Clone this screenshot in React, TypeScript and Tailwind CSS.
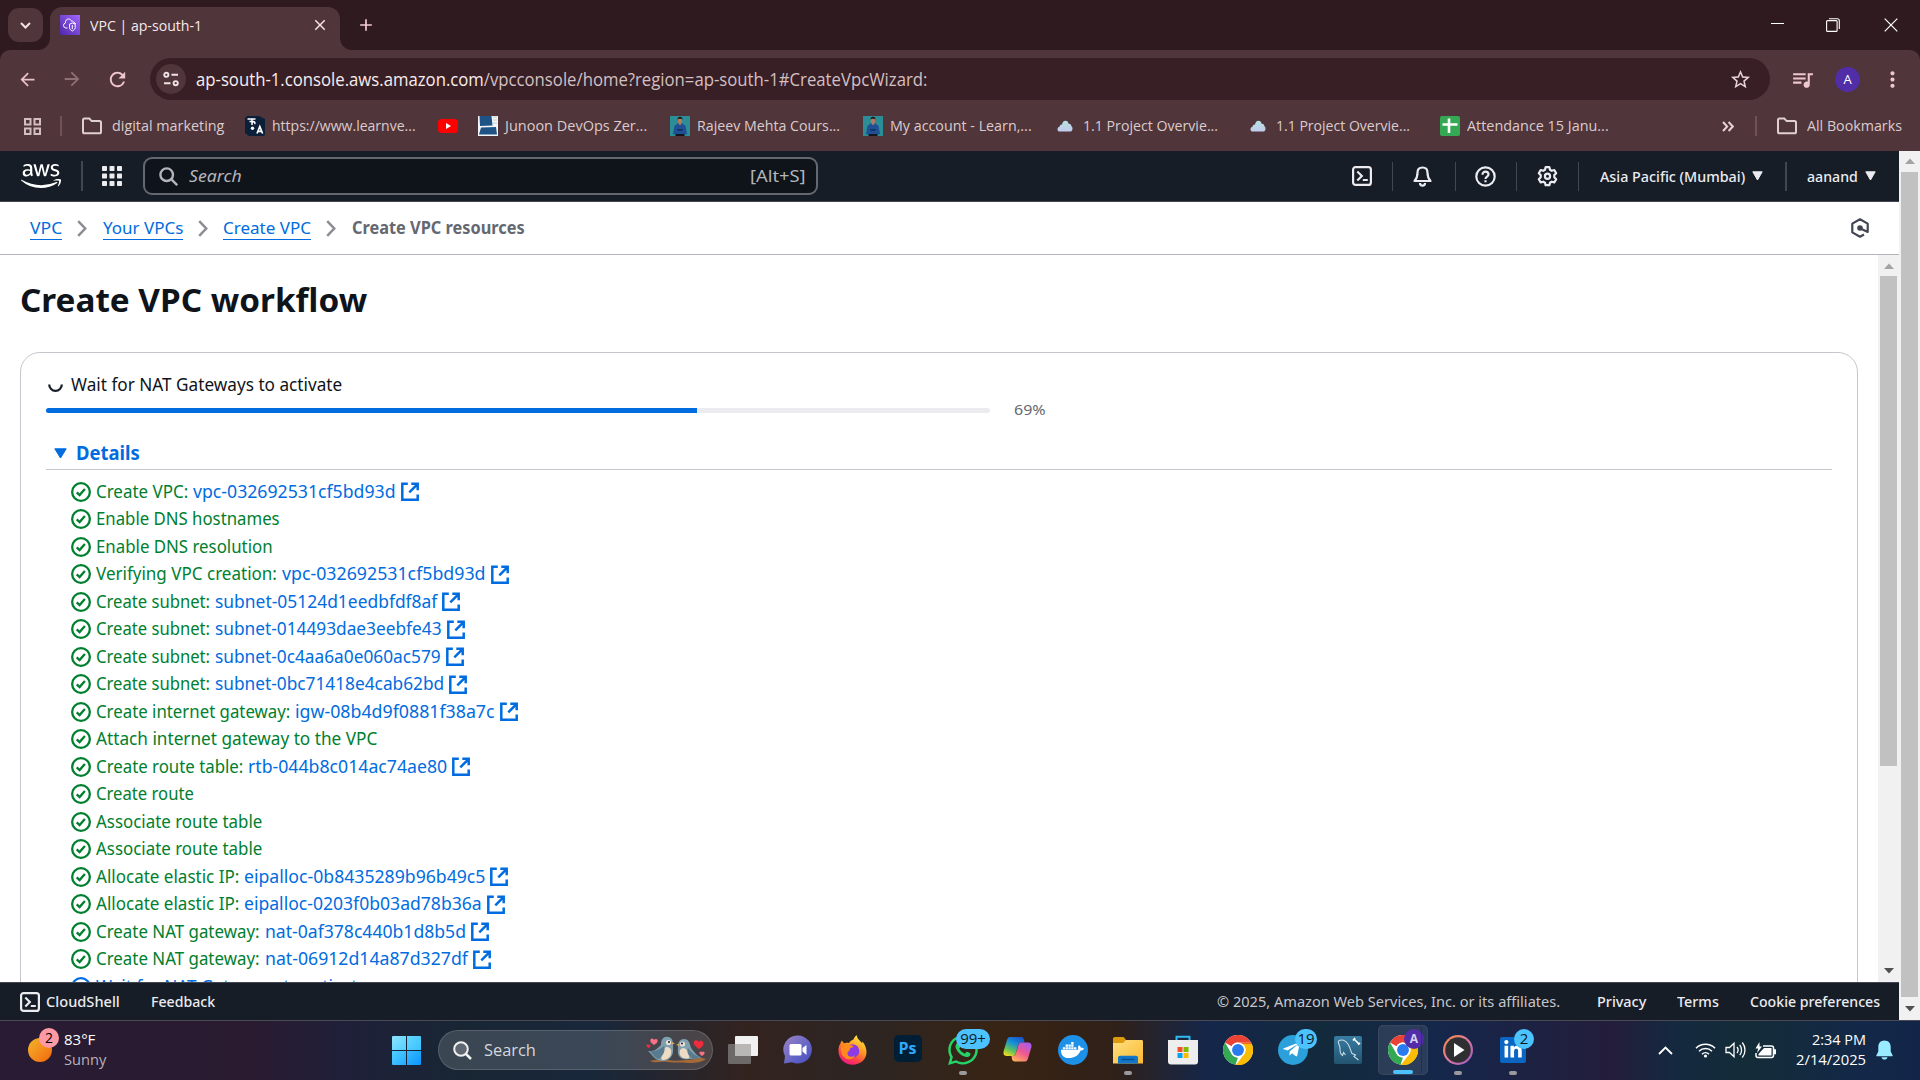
import React, { useLayoutEffect, useRef, useState } from "react";
import { FaAws, FaTelegramPlane, FaWhatsapp, FaLinkedinIn, FaDocker } from "react-icons/fa";
import { MdArrowBack, MdArrowForward, MdRefresh, MdStarBorder, MdQueueMusic, MdMoreVert, MdClose, MdAdd } from "react-icons/md";

/* Text squeezed or stretched to an exact advance width. */
function Fit({ w, className = "", children }: { w: number; className?: string; children: React.ReactNode }) {
  const ref = useRef<HTMLSpanElement>(null);
  const [scale, setScale] = useState(1);
  useLayoutEffect(() => {
    if (ref.current) setScale(w / ref.current.offsetWidth);
  }, [w]);
  return (
    <span className={"block shrink-0 whitespace-nowrap " + className} style={{ width: w }}>
      <span ref={ref} className="inline-block origin-left" style={{ transform: `scaleX(${scale})` }}>
        {children}
      </span>
    </span>
  );
}

function FolderIcon() {
  return (
    <svg className="h-[20px] w-[22px] shrink-0" viewBox="0 0 22 20" fill="none" stroke="#e0cfd1" strokeWidth="2">
      <path d="M2 4.2c0-1 .6-1.7 1.5-1.7h4.8l2.4 2.6h7.8c1 0 1.5.7 1.5 1.6v9c0 .9-.6 1.6-1.5 1.6h-15c-.9 0-1.5-.7-1.5-1.6z" />
    </svg>
  );
}

function VpcFavicon() {
  return (
    <svg className="h-[20px] w-[20px] shrink-0" viewBox="0 0 20 20" fill="none">
      <defs>
        <linearGradient id="vpc" x1="0" y1="1" x2="1" y2="0">
          <stop offset="0" stopColor="#4d27a8" />
          <stop offset="1" stopColor="#a166ff" />
        </linearGradient>
      </defs>
      <rect width="20" height="20" fill="url(#vpc)" />
      <path d="M7.5 13H5.8a2.6 2.6 0 0 1-.3-5.1C5.3 5.5 6.6 4 8.5 4c1.500 0 2.600.8 3 2.200.8-.4 2 0 2.200 1.200 1 .1 1.800.8 2 1.600" stroke="#fff" strokeWidth="1" />
      <path d="M9.500 9.200 12.300 8l2.900 1.200v3.200c0 1.700-1.300 2.800-2.900 3.600-1.600-.8-2.800-1.900-2.800-3.600zM12.300 10v4" stroke="#fff" strokeWidth="1" />
    </svg>
  );
}

function PersonIcon() {
  return (
    <svg className="h-[20px] w-[20px] shrink-0" viewBox="0 0 20 20">
      <rect width="20" height="20" fill="#2b8e96" />
      <path d="M3 18 4.500 10l3-2.500h5L15.500 10 17 18l-3 .5H6z" fill="#1f4f94" />
      <path d="M5.500 18h9v2h-9z" fill="#15151c" />
      <path d="M7 13h6l-1 2H8z" fill="#133465" />
      <path d="M8.500 6h3l-.3 2.300L10 9.300 8.800 8.300z" fill="#b57a5c" />
      <ellipse cx="10" cy="4.300" rx="2.200" ry="2.900" fill="#b57a5c" />
      <path d="M7.600 4C7.400 1.800 8.500.8 10 .8s2.700 1 2.400 3.200C12 3 11.500 2.800 10 2.800S8 3 7.600 4z" fill="#18181c" />
    </svg>
  );
}

function CloudIcon() {
  return (
    <svg className="h-[12px] w-[16px] shrink-0" viewBox="0 0 17 13">
      <defs>
        <linearGradient id="cld" x1="0" y1="0" x2="0" y2="1">
          <stop offset="0" stopColor="#b5e2e2" />
          <stop offset="1" stopColor="#c4caec" />
        </linearGradient>
      </defs>
      <path d="M3 12.500C1.300 12.500.4 11.500.4 10s1-2.500 2.200-2.700C2.800 5.400 4 4.600 5.300 4.800 5.600 2.300 7 .7 9 .7s3 1.300 3.400 3.300c2-.2 3 1 3 2.900 1 .5 1.300 1.400 1.200 2.800-.1 1.800-1.100 2.800-2.800 2.800z" fill="url(#cld)" />
    </svg>
  );
}

function ShellIcon({ color = "#ebebf0" }: { color?: string }) {
  return (
    <svg className="h-[20px] w-[20px] shrink-0" viewBox="0 0 20 20" fill="none" stroke={color} strokeWidth="2.200">
      <rect x="1.100" y="1.100" width="17.800" height="17.800" rx="2.500" />
      <path d="m5.300 5.500 4.500 4.500-4.500 4.500M10.800 14h5" />
    </svg>
  );
}

function Caret({ className = "" }: { className?: string }) {
  return (
    <svg className={"h-[10px] w-[11px] shrink-0 " + className} viewBox="0 0 11 10" fill="currentColor" stroke="currentColor" strokeWidth="1" strokeLinejoin="round">
      <path d="M.8.8h9.400L5.500 9z" />
    </svg>
  );
}

function Check() {
  return (
    <svg className="h-[20px] w-[20px] shrink-0" viewBox="0 0 20 20" fill="none" stroke="#00802f" strokeWidth="2.300">
      <circle cx="10" cy="10" r="8.850" />
      <path d="m5.700 10.300 2.900 2.700 5.300-6" />
    </svg>
  );
}

function External() {
  return (
    <svg className="h-[19px] w-[18px] shrink-0" viewBox="0 0 18 19" fill="none" stroke="#006ce0" strokeWidth="2.500">
      <path d="M6.800 1.800H1.300v16h15.400v-5.300M10.300 1.800h6.400v6.500M16.300 2.300l-8 8" />
    </svg>
  );
}

function Chevron() {
  return (
    <svg className="h-[17px] w-[10px] shrink-0" viewBox="0 0 10 17" fill="none" stroke="#8c8c94" strokeWidth="2.500">
      <path d="m1.200 1.200 7 7.300-7 7.300" />
    </svg>
  );
}

function ScrollArrow({ up = false, color }: { up?: boolean; color: string }) {
  return (
    <svg className="h-[6px] w-[10px] shrink-0" viewBox="0 0 10 6" fill={color}>
      <path d={up ? "M0 6 5 .5 10 6z" : "M0 0h10L5 5.500z"} />
    </svg>
  );
}

function TitleStrip() {
  return (
    <div className="flex h-[50px] shrink-0 bg-[#2f1a20]">
      <div className="mt-2 ml-2 flex h-[34px] w-[35px] shrink-0 items-center justify-center rounded-[11px] bg-[#50353a]">
        <svg className="h-[7px] w-[11px]" viewBox="0 0 11 7" fill="none" stroke="#f3e3e5" strokeWidth="2">
          <path d="m1 1 4.500 4.500L10 1" />
        </svg>
      </div>
      <svg className="mt-[38px] -ml-[5px] h-[12px] w-[12px] shrink-0" viewBox="0 0 12 12" fill="#50353a">
        <path d="M12 0v12H0A12 12 0 0 0 12 0z" />
      </svg>
      <div className="mt-[7px] flex h-[43px] w-[290px] shrink-0 items-start rounded-t-[12px] bg-[#50353a] pt-2 pl-[10px]">
        <VpcFavicon />
        <Fit w={112} className="ml-[10px] text-[15px] leading-5 text-[#f5e9ea]">VPC | ap-south-1</Fit>
        <MdClose className="mt-px ml-[109px] h-[18px] w-[18px] shrink-0 text-[#f3e3e5]" />
      </div>
      <svg className="mt-[38px] h-[12px] w-[12px] shrink-0" viewBox="0 0 12 12" fill="#50353a">
        <path d="M0 0v12h12A12 12 0 0 1 0 0z" />
      </svg>
      <MdAdd className="mt-[15px] ml-[4px] h-[20px] w-[20px] shrink-0 text-[#f3ccd3]" />
      <div className="ml-auto flex items-center pr-[22px] text-white">
        <div className="mb-1 h-px w-[13px] bg-white" />
        <svg className="ml-[42px] h-[14px] w-[14px]" viewBox="0 0 14 14" fill="none" stroke="#fff" strokeWidth="1.100">
          <rect x=".6" y="2.600" width="10.500" height="10.800" rx="1" />
          <path d="M3 .7h8.300c1.300 0 2 .8 2 2v8.300" />
        </svg>
        <svg className="ml-[44px] h-[14px] w-[14px]" viewBox="0 0 14 14" fill="none" stroke="#fff" strokeWidth="1.200">
          <path d="m.7.7 12.600 12.600M13.300.7.700 13.300" />
        </svg>
      </div>
    </div>
  );
}

function AddressBar() {
  return (
    <div className="flex h-[58px] items-center bg-[#50353a] pl-[17px]">
      <MdArrowBack className="h-[21px] w-[21px] text-[#e9c0c8]" />
      <MdArrowForward className="ml-[23px] h-[22px] w-[22px] text-[#8c7075]" />
      <MdRefresh className="ml-[23px] h-[23px] w-[23px] text-[#efc6ce]" />
      <div className="ml-[21px] flex h-[42px] w-[1620px] items-center rounded-full bg-[#381f25] pl-[6px]">
        <div className="flex h-[30px] w-[30px] items-center justify-center rounded-full bg-[#50353a]">
          <svg className="h-[16px] w-[16px]" viewBox="0 0 16 16" fill="none" stroke="#f0e2e4" strokeWidth="1.900">
            <circle cx="3.300" cy="3.800" r="2.100" />
            <path d="M8.500 3.800H15M1 12.200h6.500" />
            <circle cx="12.700" cy="12.200" r="2.100" />
          </svg>
        </div>
        <Fit w={731} className="ml-[10px] text-[18px] leading-6 text-[#d3bfc2]">
          <span className="text-[#f8edee]">ap-south-1.console.aws.amazon.com</span>/vpcconsole/home?region=ap-south-1#CreateVpcWizard:
        </Fit>
        <MdStarBorder className="mr-[18px] ml-auto h-[23px] w-[23px] text-[#e6d3d6]" />
      </div>
      <MdQueueMusic className="ml-[20px] h-[25px] w-[25px] text-[#f0c6ce]" />
      <div className="ml-[20px] flex h-[25px] w-[25px] items-center justify-center rounded-full bg-[#512da8] text-[13px] leading-none text-white">A</div>
      <MdMoreVert className="ml-[20px] h-[25px] w-[25px] text-[#efc6ce]" />
    </div>
  );
}

const mark = "mb-[2px] text-[15px] leading-5";

function Bookmarks() {
  return (
    <div className="flex h-[43px] items-center bg-[#50353a] pb-[7px] pl-[23px] text-[#dccbcd]">
      <svg className="h-[19px] w-[19px] shrink-0" viewBox="0 0 19 19" fill="none" stroke="#d3bfc2" strokeWidth="2">
        <path d="M2 2h5.500v5.500H2zM11.500 2H17v5.500h-5.500zM2 11.500h5.500V17H2zM11.500 11.500H17V17h-5.500z" />
      </svg>
      <div className="ml-[18px] h-5 w-[2px] shrink-0 bg-[#6f5257]" />
      <div className="ml-[19px] flex"><FolderIcon /></div>
      <Fit w={112} className={"ml-[9px] " + mark}>digital marketing</Fit>
      <svg className="ml-[21px] h-[20px] w-[20px] shrink-0" viewBox="0 0 20 20">
        <path d="M2 0h12l6 3v15a2 2 0 0 1-2 2H4l-4-3V2z" fill="#0c1f38" />
        <path d="M2.500 3h8M7 3v6M7 5.500H4.500M7 6.500c2-2 3.500 0 2.500 1.500" stroke="#fff" strokeWidth="1.500" fill="none" />
        <path d="m12 17.500 2.800-7 2.800 7M13 15.300h3.700" stroke="#fff" strokeWidth="1.700" fill="none" />
        <circle cx="7.500" cy="12.300" r="1.700" fill="#fff" />
      </svg>
      <Fit w={144} className={"ml-[7px] " + mark}>https://www.learnve...</Fit>
      <svg className="ml-[22px] h-[14px] w-[20px] shrink-0" viewBox="0 0 20 14">
        <rect width="20" height="14" rx="3.500" fill="#f00" />
        <path d="m8 4 5 3-5 3z" fill="#fff" />
      </svg>
      <svg className="ml-[20px] h-[20px] w-[20px] shrink-0" viewBox="0 0 20 20">
        <rect width="20" height="20" fill="#f3f6f8" />
        <path d="M1.500 0h12l1 9.500-12.500.5zM3 11.500l15-.5 1 7.500H1z" fill="#1f5285" />
        <path d="M15 1h4M15 4h4M15 7h4" stroke="#c5ccd3" />
      </svg>
      <Fit w={142} className={"ml-[7px] " + mark}>Junoon DevOps Zer...</Fit>
      <div className="ml-[23px] flex"><PersonIcon /></div>
      <Fit w={143} className={"ml-[7px] " + mark}>Rajeev Mehta Cours...</Fit>
      <div className="ml-[23px] flex"><PersonIcon /></div>
      <Fit w={142} className={"ml-[7px] " + mark}>My account - Learn,...</Fit>
      <div className="ml-[25px] flex"><CloudIcon /></div>
      <Fit w={135} className={"ml-[10px] " + mark}>1.1 Project Overvie...</Fit>
      <div className="ml-[32px] flex"><CloudIcon /></div>
      <Fit w={134} className={"ml-[10px] " + mark}>1.1 Project Overvie...</Fit>
      <svg className="ml-[30px] h-[20px] w-[20px] shrink-0" viewBox="0 0 20 20">
        <rect width="20" height="20" rx="2" fill="#34a853" />
        <path d="M9 2.500v14.500M2.500 8.500h15" stroke="#fff" strokeWidth="2.600" />
      </svg>
      <Fit w={142} className={"ml-[7px] " + mark}>Attendance 15 Janu...</Fit>
      <svg className="ml-[113px] h-[11px] w-[12px] shrink-0" viewBox="0 0 12 11" fill="none" stroke="#e6d3d6" strokeWidth="2">
        <path d="m1 1 4.200 4.500L1 10M6.600 1l4.200 4.500L6.600 10" />
      </svg>
      <div className="ml-[21px] h-5 w-[2px] shrink-0 bg-[#6f5257]" />
      <div className="ml-[19px] flex"><FolderIcon /></div>
      <Fit w={95} className={"ml-[9px] " + mark}>All Bookmarks</Fit>
    </div>
  );
}

function HeaderRule() {
  return <div className="h-[29px] w-px shrink-0 bg-[#424650]" />;
}

function AwsHeader() {
  return (
    <header className="flex h-[51px] shrink-0 items-center border-b border-[#424650] bg-[#161d26] pl-[21px] font-['Noto_Sans',sans-serif] text-[#ebebf0]">
      <FaAws className="h-[32px] w-[40px] shrink-0 text-white" />
      <div className="ml-[20px] h-[30px] w-[2px] shrink-0 bg-[#424650]" />
      <svg className="ml-[19px] h-[20px] w-[20px] shrink-0" viewBox="0 0 20 20" fill="#ebebf0">
        {[0, 7.5, 15].map((y) => [0, 7.5, 15].map((x) => <rect key={x + "-" + y} x={x} y={y} width="5" height="5" rx=".8" />))}
      </svg>
      <div className="ml-[21px] flex h-[38px] w-[675px] shrink-0 items-center rounded-[9px] border-2 border-[#656871] bg-[#0f141a] pl-[14px]">
        <svg className="h-[19px] w-[19px]" viewBox="0 0 19 19" fill="none" stroke="#b4b4bb" strokeWidth="2.400">
          <circle cx="7.700" cy="7.700" r="6.300" />
          <path d="m12.200 12.200 6 6" />
        </svg>
        <Fit w={53} className="ml-[11px] text-[17px] leading-6 text-[#b4b4bb] italic">Search</Fit>
        <Fit w={56} className="mr-[10px] mb-px ml-auto text-[17px] leading-6 text-[#b4b4bb]">[Alt+S]</Fit>
      </div>
      <div className="ml-[534px] flex"><ShellIcon /></div>
      <div className="ml-[20px] flex"><HeaderRule /></div>
      <svg className="ml-[20px] h-[21px] w-[19px] shrink-0" viewBox="0 0 19 21" fill="none" stroke="#ebebf0" strokeWidth="2.200">
        <path d="M9.500 1.500c3.300 0 5 2.200 5 5.200 0 3.800.9 6 3 8.300h-16c2.100-2.300 3-4.500 3-8.300 0-3 1.700-5.200 5-5.200z" strokeLinejoin="round" />
        <path d="M7 17c0 1.700 1 2.700 2.500 2.700S12 18.700 12 17" />
      </svg>
      <div className="ml-[23px] flex"><HeaderRule /></div>
      <svg className="ml-[19px] h-[21px] w-[21px] shrink-0" viewBox="0 0 21 21" fill="none" stroke="#ebebf0" strokeWidth="2.200">
        <circle cx="10.500" cy="10.500" r="9.200" />
        <path d="M7.500 8.700c0-1.900 1.200-3 3-3s3 1.100 3 2.700c0 2.200-3 2.100-3 4.600M10.500 14.300v2" />
      </svg>
      <div className="ml-[20px] flex"><HeaderRule /></div>
      <svg className="ml-[20px] h-[21px] w-[21px] shrink-0" viewBox="0 0 21 21" fill="none" stroke="#ebebf0" strokeWidth="2.200" strokeLinejoin="round">
        <path d="m8.600 1.200h3.800l.6 2.600 1.700 1 2.600-.8 1.900 3.300-1.900 1.800v2.200l1.900 1.900-1.900 3.200-2.600-.7-1.700 1-.6 2.500H8.600L8 16.700l-1.700-1-2.600.7-1.900-3.200 1.900-1.900V9.100L1.800 7.300 3.700 4l2.600.8 1.700-1z" />
        <circle cx="10.500" cy="10.300" r="2.600" />
      </svg>
      <div className="ml-[20px] flex"><HeaderRule /></div>
      <Fit w={145} className="ml-[21px] text-[15px] leading-6 font-medium">Asia Pacific (Mumbai)</Fit>
      <Caret className="ml-[7px]" />
      <div className="ml-[22px] h-[29px] w-[2px] shrink-0 bg-[#424650]" />
      <Fit w={51} className="ml-[20px] text-[15px] leading-6 font-medium">aanand</Fit>
      <Caret className="ml-[7px]" />
    </header>
  );
}

function Crumb({ w, children }: { w: number; children: React.ReactNode }) {
  return (
    <div className="h-[23px] border-b border-[#006ce0] text-[#006ce0]">
      <Fit w={w} className="leading-[22px]">{children}</Fit>
    </div>
  );
}

function Breadcrumbs() {
  return (
    <nav className="flex h-[53px] shrink-0 items-center border-b border-[#b4b4bb] bg-white pl-[30px] font-['Noto_Sans',sans-serif] text-[17px]">
      <Crumb w={32}>VPC</Crumb>
      <div className="ml-[15px] flex"><Chevron /></div>
      <div className="ml-[16px]"><Crumb w={80}>Your VPCs</Crumb></div>
      <div className="ml-[15px] flex"><Chevron /></div>
      <div className="ml-[15px]"><Crumb w={88}>Create VPC</Crumb></div>
      <div className="ml-[15px] flex"><Chevron /></div>
      <Fit w={173} className="ml-[16px] font-bold text-[#656871]">Create VPC resources</Fit>
      <svg className="mr-[30px] ml-auto h-[20px] w-[18px]" viewBox="0 0 18 20" fill="none" stroke="#424650" strokeWidth="2.200" strokeLinejoin="round">
        <path d="M13 16.500 9 18.700l-7.700-4.300V5.600L9 1.300l7.700 4.300v8.300L9.500 10.500" />
        <circle cx="9" cy="10" r="1.700" fill="#424650" />
      </svg>
    </nav>
  );
}

type Step = { label: string; w: number; link?: string; lw?: number };

const steps: Step[] = [
  { label: "Create VPC:", w: 92, link: "vpc-032692531cf5bd93d", lw: 203 },
  { label: "Enable DNS hostnames", w: 184 },
  { label: "Enable DNS resolution", w: 177 },
  { label: "Verifying VPC creation:", w: 181, link: "vpc-032692531cf5bd93d", lw: 204 },
  { label: "Create subnet:", w: 114, link: "subnet-05124d1eedbfdf8af", lw: 222 },
  { label: "Create subnet:", w: 114, link: "subnet-014493dae3eebfe43", lw: 227 },
  { label: "Create subnet:", w: 114, link: "subnet-0c4aa6a0e060ac579", lw: 226 },
  { label: "Create subnet:", w: 114, link: "subnet-0bc71418e4cab62bd", lw: 229 },
  { label: "Create internet gateway:", w: 194, link: "igw-08b4d9f0881f38a7c", lw: 200 },
  { label: "Attach internet gateway to the VPC", w: 281 },
  { label: "Create route table:", w: 147, link: "rtb-044b8c014ac74ae80", lw: 199 },
  { label: "Create route", w: 98 },
  { label: "Associate route table", w: 166 },
  { label: "Associate route table", w: 166 },
  { label: "Allocate elastic IP:", w: 143, link: "eipalloc-0b8435289b96b49c5", lw: 241 },
  { label: "Allocate elastic IP:", w: 143, link: "eipalloc-0203f0b03ad78b36a", lw: 238 },
  { label: "Create NAT gateway:", w: 164, link: "nat-0af378c440b1d8b5d", lw: 201 },
  { label: "Create NAT gateway:", w: 164, link: "nat-06912d14a87d327df", lw: 203 },
];

function Workflow() {
  return (
    <main className="h-[727px] w-[1878px] shrink-0 overflow-hidden bg-white pl-[20px] font-['Noto_Sans',sans-serif]">
      <Fit w={347} className="mt-[24px] text-[33px] leading-[42px] font-bold text-[#0f141a]">Create VPC workflow</Fit>
      <section className="mt-[31px] h-[900px] w-[1838px] rounded-[20px] border border-[#c6c6cd] pt-[18px] pl-[25px] text-[17.500px] text-[#0f141a]">
        <div className="flex h-[27px] items-center">
          <svg className="mb-px ml-[2px] h-[15px] w-[15px]" viewBox="0 0 15 15" fill="none" stroke="#161d26" strokeWidth="2.200">
            <path d="M1.200 7.500a6.300 6.300 0 0 0 12.600 0" />
          </svg>
          <Fit w={271} className="ml-[8px] leading-[27px]">Wait for NAT Gateways to activate</Fit>
        </div>
        <div className="mt-[2px] flex h-[21px] items-center">
          <div className="h-[5px] w-[944px] rounded-full bg-[#ebebf0]">
            <div className="h-full w-[69%] rounded-l-full bg-[#006ce0]" />
          </div>
          <Fit w={32} className="mb-[3px] ml-[24px] text-[15px] leading-5 text-[#656871]">69%</Fit>
        </div>
        <div className="mt-[1px] flex h-[48px] w-[1786px] items-center border-b border-[#c6c6cd] pt-[15px] pl-[8px] text-[#006ce0]">
          <svg className="h-[11px] w-[13px]" viewBox="0 0 13 11" fill="currentColor" stroke="currentColor" strokeLinejoin="round">
            <path d="M.8.8h11.400L6.500 10z" />
          </svg>
          <Fit w={64} className="ml-[9px] text-[19px] leading-6 font-bold">Details</Fit>
        </div>
        <ul className="mt-[8px] pl-[25px]">
          {steps.map((s, i) => (
            <li key={i} className="flex h-[27.500px] items-center">
              <Check />
              <Fit w={s.w} className="mb-px ml-[5px] leading-[27px] text-[#00802f]">{s.label}</Fit>
              {s.link && s.lw && (
                <>
                  <Fit w={s.lw} className="mb-px ml-[5px] leading-[27px] text-[#006ce0]">{s.link}</Fit>
                  <div className="ml-[5px] flex"><External /></div>
                </>
              )}
            </li>
          ))}
          <li className="flex h-[27.500px] items-center text-[#006ce0]">
            <svg className="h-[20px] w-[20px]" viewBox="0 0 20 20" fill="none" stroke="currentColor" strokeWidth="2.300">
              <circle cx="10" cy="10" r="8.850" />
            </svg>
            <Fit w={271} className="mb-px ml-[5px] leading-[27px]">Wait for NAT Gateways to activate</Fit>
          </li>
        </ul>
      </section>
    </main>
  );
}

function Scrollbar({ thumb }: { thumb: string }) {
  return (
    <div className="flex w-[21px] shrink-0 flex-col items-center bg-[#f1f1f1]">
      <div className="flex h-[21px] items-center"><ScrollArrow up color="#a3a3a3" /></div>
      <div className={"w-[17px] bg-[#c1c1c1] " + thumb} />
      <div className="mt-auto flex h-[23px] items-center"><ScrollArrow color="#505050" /></div>
    </div>
  );
}

function AwsFooter() {
  return (
    <footer className="flex h-[38px] shrink-0 items-center border-t border-[#424650] bg-[#161d26] pl-[20px] font-['Noto_Sans',sans-serif] text-[15px] font-medium text-[#ebebf0]">
      <ShellIcon />
      <Fit w={74} className="ml-[6px]">CloudShell</Fit>
      <Fit w={64} className="ml-[31px]">Feedback</Fit>
      <Fit w={343} className="ml-[1002px] font-normal text-[#c6c6cd]">© 2025, Amazon Web Services, Inc. or its affiliates.</Fit>
      <Fit w={49} className="ml-[37px]">Privacy</Fit>
      <Fit w={42} className="ml-[31px]">Terms</Fit>
      <Fit w={130} className="ml-[31px]">Cookie preferences</Fit>
    </footer>
  );
}

function Chrome() {
  return (
    <svg className="h-[30px] w-[30px]" viewBox="0 0 48 48">
      <circle cx="24" cy="24" r="24" fill="#fff" />
      <path d="M3.200 12A24 24 0 0 1 44.800 12H24a12 12 0 0 0-10.400 6z" fill="#ea4335" />
      <path d="M3.200 12 13.600 30A12 12 0 0 0 24 36L20 47.700A24 24 0 0 1 3.200 12z" fill="#34a853" />
      <path d="M44.800 12A24 24 0 0 1 20.500 47.800L34.400 30A12 12 0 0 0 31 14V12z" fill="#fbbc04" />
      <path d="M24 12h20.800L46 14H24z" fill="#ea4335" />
      <circle cx="24" cy="24" r="12" fill="#fff" />
      <circle cx="24" cy="24" r="9.500" fill="#2a7af0" />
    </svg>
  );
}

function Birds() {
  return (
    <svg className="h-[28px] w-[60px] shrink-0" viewBox="0 0 60 28">
      <path d="M4 25c6-2 10 0 17-1 6 1 12 1 18 0 7 0 12-2 17-2l4 1c-4 3-10 4-17 4-8-1-15 0-21-1-7-1-11 1-15 0z" fill="#a56a38" />
      <path d="M2 15c7 1 10-3 13-6C15 3 18 0 22 1c4 0 5 4 5 7 0 5 1 9-2 13-3 4-8 5-13 3C7 22 6 18 2 15z" fill="#7f9fae" />
      <path d="M20 11c4 0 6 2 5 7-1 4-5 6-9 6-2-5 0-10 4-13z" fill="#ecdcc4" />
      <path d="M4 15c6 1 10-2 14-5 2 4-1 10-5 13-5-1-6-5-9-8z" fill="#587b91" />
      <circle cx="22.500" cy="6.500" r="2.600" fill="#e9e2d6" />
      <circle cx="23" cy="6" r="1" fill="#15212a" />
      <path d="m26 6 3 1.500-3 1z" fill="#d7aa5d" />
      <path d="M56 22c-5-2-7-5-11-10-1-4-2-9-7-9-4 0-6 3-6 7 0 5-1 9 3 12 5 3 13 0 21 0z" fill="#7f9fae" />
      <path d="M38 12c-4 0-5 3-4 7 2 4 7 4 9 3 1-4-1-8-5-10z" fill="#ecdcc4" />
      <path d="M55 21c-6-1-9-4-13-9-2 4 1 9 5 11z" fill="#587b91" />
      <circle cx="36.500" cy="8" r="2.600" fill="#e9e2d6" />
      <circle cx="36" cy="7.500" r="1" fill="#15212a" />
      <path d="m33 7.500-3 1.500 3 1z" fill="#d7aa5d" />
      <path d="M8 9C5 7 3.500 5.500 4.500 3.500 5.500 2 7.500 2.500 8 4c1-1.500 3-1.500 3.500 0C12 6 10.500 7.500 8 9z" fill="#fb7185" />
      <path d="M2.500 12C1 11 0 10 .5 9s1.500-.7 2 0c.6-.7 1.700-.7 2 .2.300 1-.8 2-2 2.800z" fill="#ef2b3d" />
      <path d="M53 13c-4-3-6-5-5-7.500 1-2 4-1.500 4.800.5 1.200-2 4-1.500 4.500.5C58 9 56 11 53 13z" fill="#ef2b3d" />
      <path d="M56 20c-2-1.300-3-2.500-2.500-3.700.5-1 2-1 2.500 0 .6-1 2-1 2.500 0 .5 1.200-.6 2.500-2.500 3.700z" fill="#fb7185" />
    </svg>
  );
}

/* A taskbar slot: an icon box with room for a badge and a running mark. */
function Slot({ children, badge, badgeClass = "", mark = false }: { children: React.ReactNode; badge?: string; badgeClass?: string; mark?: boolean }) {
  return (
    <div className="relative flex h-[50px] w-[55px] shrink-0 items-center justify-center">
      {children}
      {badge && (
        <span className={"absolute top-[4px] flex h-[20px] items-center justify-center rounded-full bg-[#4cc2ff] text-[15px] leading-none text-[#0c1a24] " + badgeClass}>{badge}</span>
      )}
      {mark && <span className="absolute bottom-0 h-[4px] w-[8px] rounded-full bg-[#9a9a9c]" />}
    </div>
  );
}

function Taskbar() {
  return (
    <div className="flex h-[60px] items-center border-t border-[#4a4a55] bg-[linear-gradient(90deg,#281b33_0%,#2a1b31_13%,#1f2039_18%,#182634_24%,#18273a_31%,#33231f_39%,#2c2523_45%,#382414_52%,#302018_58%,#14264a_63%,#132a3c_69%,#15274b_75%,#241d3b_84%,#14283f_87%,#142c38_91%,#132848_97%,#122549_100%)] pl-[28px] text-white">
      <div className="relative mb-px h-[40px] w-[31px] shrink-0">
        <div className="mt-[8px] h-[24px] w-[24px] rounded-full bg-linear-to-br from-[#efb42b] to-[#f4640b]" />
        <span className="absolute top-[-2px] right-0 flex h-[20px] w-[20px] items-center justify-center rounded-full bg-[#ff99a4] text-[14px] leading-none text-black">2</span>
      </div>
      <div className="mb-[4px] ml-[5px] w-[44px] shrink-0 text-[15px] leading-[20px]">
        <Fit w={31}>83°F</Fit>
        <Fit w={42} className="text-[#b9b0bb]">Sunny</Fit>
      </div>
      <div className="mb-px ml-[284px] grid h-[29px] w-[29px] shrink-0 grid-cols-2 gap-px">
        <div className="rounded-tl-[1px] bg-linear-to-br from-[#8be3ff] to-[#4fd0ff]" />
        <div className="rounded-tr-[1px] bg-linear-to-br from-[#62d9ff] to-[#3ac0ff]" />
        <div className="rounded-bl-[1px] bg-linear-to-br from-[#52d0ff] to-[#22aaff]" />
        <div className="rounded-br-[1px] bg-linear-to-br from-[#35bcff] to-[#0895ff]" />
      </div>
      <div className="mb-px ml-[17px] flex h-[40px] w-[275px] shrink-0 items-center rounded-full border border-white/15 bg-white/15 pl-[14px]">
        <svg className="h-[19px] w-[19px]" viewBox="0 0 19 19" fill="none" stroke="#f1f1f1" strokeWidth="2">
          <circle cx="8" cy="8" r="6.800" fill="#ffffff30" />
          <path d="m13 13 5 5" strokeWidth="2.500" />
        </svg>
        <Fit w={52} className="ml-[12px] text-[17px] leading-6 text-[#d6d8dc]">Search</Fit>
        <div className="ml-[110px] flex"><Birds /></div>
      </div>
      <div className="mb-[2px] ml-[2px] flex items-center">
        <Slot>
          <svg className="h-[28px] w-[30px]" viewBox="0 0 30 28">
            <rect y="8" width="23" height="20" rx="1" fill="#6d6968" />
            <rect x="7" width="23" height="20" rx="1" fill="#f1f1f1" />
            <path d="M7 8h16v12H7z" fill="#b9b7b6" />
          </svg>
        </Slot>
        <Slot>
          <svg className="h-[29px] w-[30px]" viewBox="0 0 30 29">
            <defs>
              <linearGradient id="cht" x1="0" y1="0" x2="1" y2="1">
                <stop offset="0" stopColor="#9d84c4" />
                <stop offset=".6" stopColor="#6264c7" />
                <stop offset="1" stopColor="#4a4cc0" />
              </linearGradient>
            </defs>
            <path d="M15 .5a14 14 0 1 1-6 26.700L1 28.500l1-7.500A14 14 0 0 1 15 .5z" fill="url(#cht)" />
            <rect x="6.500" y="9" width="12" height="11.500" rx="1.500" fill="#fff" />
            <path d="m19.500 13 4-3v10l-4-3.500z" fill="#fff" />
          </svg>
        </Slot>
        <Slot>
          <svg className="h-[30px] w-[29px]" viewBox="0 0 29 30">
            <defs>
              <linearGradient id="ffx" x1=".8" y1="0" x2=".3" y2="1">
                <stop offset="0" stopColor="#fff14a" />
                <stop offset=".45" stopColor="#ff9420" />
                <stop offset=".8" stopColor="#ff3750" />
                <stop offset="1" stopColor="#e5178e" />
              </linearGradient>
            </defs>
            <path d="M4 5.500c.5 1 1 2 2 2.700C8 7.500 9 7.500 11 8c1-2 3-3 4.500-3.500C16 3 17 1.300 18.800.3c.4 4 3 4.700 5.200 8 .4-.3.500-1 .3-2 3 3.500 4.400 8 4.200 11.700C28 25 22 29.700 14.500 29.700S.7 24 .5 16.500C.4 13 1 10 2.500 8.500 2.700 7.500 3 6.500 4 5.500z" fill="url(#ffx)" />
            <circle cx="14.500" cy="16" r="6.800" fill="#8a3be6" />
            <path d="M4 10c3-1.500 6-1.500 8.500.3 2 .1 3 .6 3 1.200-.8 1.300-3 1.200-3.500 2 0 3-2.500 3-2.500 4.500C9 22 14 23 17 20c-1 4-6 6-10 3C2 19.500 2.500 13 4 10z" fill="#ff8a1d" />
          </svg>
        </Slot>
        <Slot>
          <div className="mb-[2px] flex h-[27px] w-[28px] items-center justify-center rounded-[5px] bg-[#001e36] pb-[1px] text-[16px] leading-none font-bold text-[#31a8ff]">Ps</div>
        </Slot>
        <Slot badge="99+" badgeClass="left-[21px] w-[34px]" mark>
          <FaWhatsapp className="h-[34px] w-[34px] text-[#25d366]" />
        </Slot>
        <Slot>
          <svg className="mb-[2px] h-[26px] w-[29px]" viewBox="0 0 29 26">
            <defs>
              <linearGradient id="cpa" x1=".7" y1="0" x2=".2" y2="1">
                <stop offset="0" stopColor="#1b57cf" />
                <stop offset=".35" stopColor="#1591d6" />
                <stop offset=".7" stopColor="#5fc35c" />
                <stop offset="1" stopColor="#f2dc1f" />
              </linearGradient>
              <linearGradient id="cpb" x1=".8" y1="0" x2=".2" y2="1">
                <stop offset="0" stopColor="#a65cf0" />
                <stop offset=".5" stopColor="#f0588f" />
                <stop offset="1" stopColor="#ffb05c" />
              </linearGradient>
            </defs>
            <path d="M7 1h11c2 0 2.500 1 3 3l.5 2.500h-3c-2 0-3 1-3.500 3L12.500 18c-.5 1.500-1.500 2-3 2H4c-3 0-4-2-3.300-5L4 4c.6-2 1.500-3 3-3z" fill="url(#cpa)" />
            <path d="M22 25.500H12c-2 0-2.800-1-3.200-3L8.500 20h1.200c1.500 0 2.500-.6 3-2.300l2.600-8.500c.5-1.700 1.500-2.700 3.200-2.700H25c3 0 4 2 3.300 5L25 22.500c-.6 2-1.500 3-3 3z" fill="url(#cpb)" />
          </svg>
        </Slot>
        <Slot>
          <div className="flex h-[30px] w-[30px] items-center justify-center rounded-full bg-[#1d91e8]">
            <FaDocker className="h-[20px] w-[23px] text-white" />
          </div>
        </Slot>
        <Slot mark>
          <svg className="h-[28px] w-[30px]" viewBox="0 0 30 28">
            <defs>
              <linearGradient id="fld" x1="0" y1="0" x2="1" y2="1">
                <stop offset="0" stopColor="#ffe083" />
                <stop offset="1" stopColor="#fcb92f" />
              </linearGradient>
            </defs>
            <path d="M0 3C0 1.700.7 1 2 1h7.500c1 0 1.500.3 2 1l1.500 2v6H0z" fill="#dd9a0e" />
            <path d="M0 7h10l3-3h15.500c1 0 1.500.5 1.500 1.500v22H0z" fill="url(#fld)" />
            <path d="M5 27.500V22c0-1.500.8-2.300 2.300-2.300h15.400c1.500 0 2.300.8 2.300 2.300v5.500z" fill="#1377c9" />
            <path d="M8.500 23.500h13" stroke="#0b4f93" strokeWidth="1.500" />
          </svg>
        </Slot>
        <Slot>
          <svg className="h-[30px] w-[30px]" viewBox="0 0 30 30">
            <path d="M8.500 6V1.800h13V6" fill="none" stroke="#2fb9f0" strokeWidth="2" />
            <path d="M0 5h30v21.500c0 2-1 3-3 3H3c-2 0-3-1-3-3z" fill="#eeeeee" />
            <path d="M9.500 12h5v5h-5z" fill="#f25022" />
            <path d="M15.500 12h5v5h-5z" fill="#7fba00" />
            <path d="M9.500 18h5v5h-5z" fill="#00a4ef" />
            <path d="M15.500 18h5v5h-5z" fill="#ffb900" />
          </svg>
        </Slot>
        <Slot><Chrome /></Slot>
        <Slot badge="19" badgeClass="left-[30px] w-[22px]">
          <div className="flex h-[30px] w-[30px] items-center justify-center rounded-full bg-[#2ba0da]">
            <FaTelegramPlane className="mr-[2px] h-[19px] w-[19px] text-white" />
          </div>
        </Slot>
        <Slot>
          <svg className="h-[28px] w-[28px]" viewBox="0 0 28 28" fill="none">
            <defs>
              <linearGradient id="sql" x1="0" y1="0" x2="0" y2="1">
                <stop offset="0" stopColor="#387ca3" />
                <stop offset="1" stopColor="#23546f" />
              </linearGradient>
            </defs>
            <rect width="28" height="28" rx="2" fill="url(#sql)" />
            <path d="M4.500 5c3-2 7-1 9.500 3 2 3 2.500 6.500 4 9.500l3.500 1.500-1.500 1.500 4.500 3.500M4.500 5c-1 2 1.500 4 1.500 7 0 2-.3 4 1 6l1.500 1.500 1-3 2 2.500" stroke="#c9dbe5" strokeWidth="1.100" />
            <path d="m20.500 3.500 4 4M19 4.500l2-2.500M24 8.500l2-1.500" stroke="#fff" strokeWidth="1.700" />
          </svg>
        </Slot>
        <div className="relative ml-[3px] flex h-[50px] w-[50px] shrink-0 items-center rounded-[5px] border border-white/5 bg-white/10 pl-[9px]">
          <Chrome />
          <span className="absolute top-[3px] left-[25px] flex h-[20px] w-[20px] items-center justify-center rounded-full bg-[#512da8] text-[12px] leading-none font-bold text-[#d9cdf2]">A</span>
          <span className="absolute top-[-1px] right-[5px] h-[50px] w-[8px] rounded-r-[5px] border-r border-black/20" />
          <span className="absolute bottom-0 left-[14px] h-[4px] w-[20px] rounded-full bg-[#4cc2ff]" />
        </div>
        <div className="ml-[2px] flex">
          <Slot mark>
            <svg className="h-[30px] w-[30px]" viewBox="0 0 30 30">
              <defs>
                <linearGradient id="mp" x1="0" y1="0" x2="1" y2="1">
                  <stop offset="0" stopColor="#fb8a3c" />
                  <stop offset=".5" stopColor="#d97aa0" />
                  <stop offset="1" stopColor="#9a55c9" />
                </linearGradient>
              </defs>
              <circle cx="15" cy="15" r="15" fill="url(#mp)" />
              <circle cx="15" cy="15" r="12.800" fill="#2f2f31" />
              <path d="M11 8v14l10.500-7z" fill="#fff" />
            </svg>
          </Slot>
          <Slot badge="2" badgeClass="left-[29px] w-[20px]" mark>
            <div className="flex h-[26px] w-[26px] items-center justify-center rounded-[2px] bg-[#0a66c2]">
              <FaLinkedinIn className="h-[20px] w-[20px] text-white" />
            </div>
          </Slot>
        </div>
      </div>
      <div className="mb-px ml-auto flex items-center pr-[27px]">
        <svg className="h-[9px] w-[15px]" viewBox="0 0 15 9" fill="none" stroke="#fff" strokeWidth="1.800">
          <path d="m1 8 6.500-6.500L14 8" />
        </svg>
        <svg className="ml-[22px] h-[16px] w-[21px]" viewBox="0 0 21 16" fill="none" stroke="#fff" strokeWidth="1.500">
          <path d="M1 6.300a13.400 13.400 0 0 1 19 0M4 9.300a9.200 9.200 0 0 1 13 0M7 12.200a5 5 0 0 1 7 0" />
          <circle cx="10.500" cy="14" r="1.600" fill="#fff" stroke="none" />
        </svg>
        <svg className="ml-[9px] h-[18px] w-[21px]" viewBox="0 0 21 18" fill="none" stroke="#fff" strokeWidth="1.300">
          <path d="M1 6.500h3.500L9 2.300v13.400L4.500 11.500H1zM12 6c1.300 1.700 1.300 4.300 0 6M14.700 3.800c2.500 3 2.500 7.400 0 10.400M17.300 1.500c3.600 4.400 3.600 10.600 0 15" />
        </svg>
        <svg className="ml-[9px] h-[17px] w-[21px]" viewBox="0 0 21 17" fill="none" stroke="#fff" strokeWidth="1.500">
          <path d="M8 4h8.500c1.300 0 2 .7 2 2v7.500c0 1.300-.7 2-2 2H3c-1.300 0-2-.7-2-2V11" />
          <path d="M9 6h7.500v7.500H3.500V12z" fill="#fff" stroke="none" />
          <path d="M19 8h1.500v3.500H19" fill="#fff" />
          <path d="M4.500 0 .5 6.500h2.700L2 11l5-6.500H4.500z" fill="#fff" stroke="none" />
        </svg>
        <div className="mb-[2px] ml-[20px] flex w-[70px] flex-col items-end text-[15px] leading-[20px]">
          <Fit w={54}>2:34 PM</Fit>
          <Fit w={70}>2/14/2025</Fit>
        </div>
        <svg className="ml-[10px] h-[20px] w-[17px]" viewBox="0 0 17 20" fill="#99ebff">
          <path d="M8.500.5c4 0 6.200 2.800 6.200 6.500v4.500l1.900 3.700c.2.500 0 1-.6 1H1c-.6 0-.8-.5-.6-1l1.900-3.700V7C2.300 3.300 4.500.5 8.500.5zM5.500 17.200h6c-.3 1.500-1.500 2.300-3 2.300s-2.700-.8-3-2.300z" />
        </svg>
      </div>
    </div>
  );
}

export default function App() {
  return (
    <div className="flex h-[1080px] w-[1920px] flex-col overflow-hidden bg-[#50353a] font-['Open_Sans',sans-serif]">
      <TitleStrip />
      <div className="shrink-0 bg-[#2f1a20]">
        <div className="overflow-hidden rounded-t-[10px]">
          <AddressBar />
          <Bookmarks />
        </div>
      </div>
      <div className="flex h-[869px] shrink-0">
        <div className="flex w-[1899px] shrink-0 flex-col">
          <AwsHeader />
          <Breadcrumbs />
          <div className="flex h-[727px] shrink-0">
            <Workflow />
            <Scrollbar thumb="h-[490px]" />
          </div>
          <AwsFooter />
        </div>
        <Scrollbar thumb="h-[826px]" />
      </div>
      <Taskbar />
    </div>
  );
}
